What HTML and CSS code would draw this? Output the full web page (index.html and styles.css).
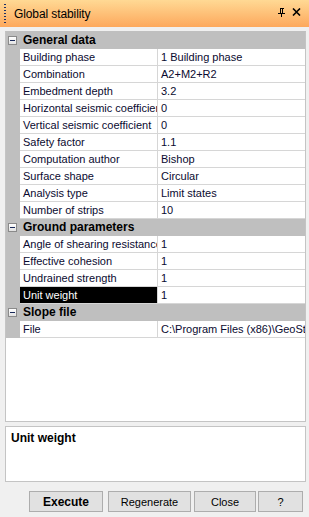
FILE: index.html
```html
<!DOCTYPE html>
<html lang="en">
<head>
  <meta charset="UTF-8" />
  <title>Global stability</title>
  <link rel="stylesheet" href="styles.css">
</head>
<body>
  <div class="panel">
    <div class="titlebar">
      <span class="grip"></span>
      <span class="title">Global stability</span>
      <span class="tools">
        <svg width="8" height="9" viewBox="0 0 8 9"><path d="M2 0h4v1H5v4h2v1H4v3H3V6H0V5h2V1H2z M3 1v4h1V1z" fill="#000"/></svg>
        <svg width="9" height="8" viewBox="0 0 9 8"><path d="M1 0.5l7 7M8 0.5l-7 7" stroke="#000" stroke-width="1.6"/></svg>
      </span>
    </div>

    <div class="grid-box">
      <div class="group"><span class="gutter"><i class="toggle"></i></span><span class="gname">General data</span></div>
      <div class="row"><span class="gutter"></span><span class="name">Building phase</span><span class="value">1 Building phase</span></div>
      <div class="row"><span class="gutter"></span><span class="name">Combination</span><span class="value">A2+M2+R2</span></div>
      <div class="row"><span class="gutter"></span><span class="name">Embedment depth</span><span class="value">3.2</span></div>
      <div class="row"><span class="gutter"></span><span class="name">Horizontal seismic coefficient</span><span class="value">0</span></div>
      <div class="row"><span class="gutter"></span><span class="name">Vertical seismic coefficient</span><span class="value">0</span></div>
      <div class="row"><span class="gutter"></span><span class="name">Safety factor</span><span class="value">1.1</span></div>
      <div class="row"><span class="gutter"></span><span class="name">Computation author</span><span class="value">Bishop</span></div>
      <div class="row"><span class="gutter"></span><span class="name">Surface shape</span><span class="value">Circular</span></div>
      <div class="row"><span class="gutter"></span><span class="name">Analysis type</span><span class="value">Limit states</span></div>
      <div class="row"><span class="gutter"></span><span class="name">Number of strips</span><span class="value">10</span></div>

      <div class="group"><span class="gutter"><i class="toggle"></i></span><span class="gname">Ground parameters</span></div>
      <div class="row"><span class="gutter"></span><span class="name">Angle of shearing resistance</span><span class="value">1</span></div>
      <div class="row"><span class="gutter"></span><span class="name">Effective cohesion</span><span class="value">1</span></div>
      <div class="row"><span class="gutter"></span><span class="name">Undrained strength</span><span class="value">1</span></div>
      <div class="row selected"><span class="gutter"></span><span class="name">Unit weight</span><span class="value">1</span></div>

      <div class="group"><span class="gutter"><i class="toggle"></i></span><span class="gname">Slope file</span></div>
      <div class="row"><span class="gutter"></span><span class="name">File</span><span class="value">C:\Program Files (x86)\GeoStru\Slope</span></div>
    </div>

    <div class="desc">Unit weight</div>

    <div class="buttons">
      <button class="btn btn-execute">Execute</button>
      <button class="btn btn-regen">Regenerate</button>
      <button class="btn btn-close">Close</button>
      <button class="btn btn-help">?</button>
    </div>
  </div>
</body>
</html>
```

FILE: styles.css
```css
body {
  margin: 0;
  font-family: 'Liberation Sans', Arial, sans-serif;
  font-size: 11px;
  color: #000;
  background: #f0f0f0;
}
.panel {
  width: 309px;
  height: 517px;
  background: #f0f0f0;
  display: flex;
  flex-direction: column;
}
.titlebar {
  height: 27px;
  display: flex;
  align-items: center;
  background: linear-gradient(#ffd994, #fda85c);
  padding: 0 8px 0 4px;
  box-sizing: border-box;
}
.grip {
  width: 2px;
  height: 20px;
  background: repeating-linear-gradient(#1d2f66 0 1px, transparent 1px 3px);
  margin-right: 8px;
}
.title {
  flex: 1;
  font-size: 12px;
  letter-spacing: -0.1px;
}
.tools {
  display: flex;
  align-items: center;
  gap: 6px;
  margin-top: -3px;
}
.tools svg {
  display: block;
}
.grid-box {
  margin: 4px 3px 0 5px;
  height: 389px;
  background: #fff;
  border: 1px solid #c4c4c4;
  border-top-color: #bfbfbf;
  overflow: hidden;
}
.row, .group {
  display: grid;
  grid-template-columns: 14px 137px 1fr;
  height: 17px;
  line-height: 16px;
}
.group {
  background: #bfbfbf;
  grid-template-columns: 14px 1fr;
}
.gutter {
  background: #bfbfbf;
  display: flex;
  align-items: center;
  justify-content: center;
}
.toggle {
  width: 7px;
  height: 7px;
  border: 1px solid #8a8a8a;
  background: linear-gradient(#ffffff, #e2e2e2);
  position: relative;
  margin-right: 1px;
}
.toggle::after {
  content: "";
  position: absolute;
  left: 1px;
  top: 3px;
  width: 5px;
  height: 1px;
  background: #1a2a5a;
}
.gname {
  font-weight: bold;
  padding-left: 3px;
  font-size: 12px;
}
.name, .value {
  border-bottom: 1px solid #d6d6d6;
  padding-left: 3px;
  white-space: nowrap;
  overflow: hidden;
}
.value {
  border-left: 1px solid #d6d6d6;
  color: #0a0a30;
}
.name {
  color: #0a0a30;
}
.selected .name {
  background: #000;
  color: #fff;
}
.desc {
  margin: 4px 3px 0 5px;
  height: 56px;
  background: #fff;
  border: 1px solid #c4c4c4;
  padding: 4px 5px;
  box-sizing: border-box;
  font-weight: bold;
  font-size: 12px;
}
.buttons {
  display: flex;
  padding: 9px 0 0 29px;
}
.btn {
  height: 21px;
  font-family: inherit;
  font-size: 11px;
  background: #e1e1e1;
  border: 1px solid #adadad;
  padding: 0;
  color: #000;
}
.btn-execute { width: 74px; font-weight: bold; font-size: 12px; }
.btn-regen { width: 83px; margin-left: 5px; }
.btn-close { width: 62px; margin-left: 3px; }
.btn-help { width: 45px; margin-left: 2px; }
```
